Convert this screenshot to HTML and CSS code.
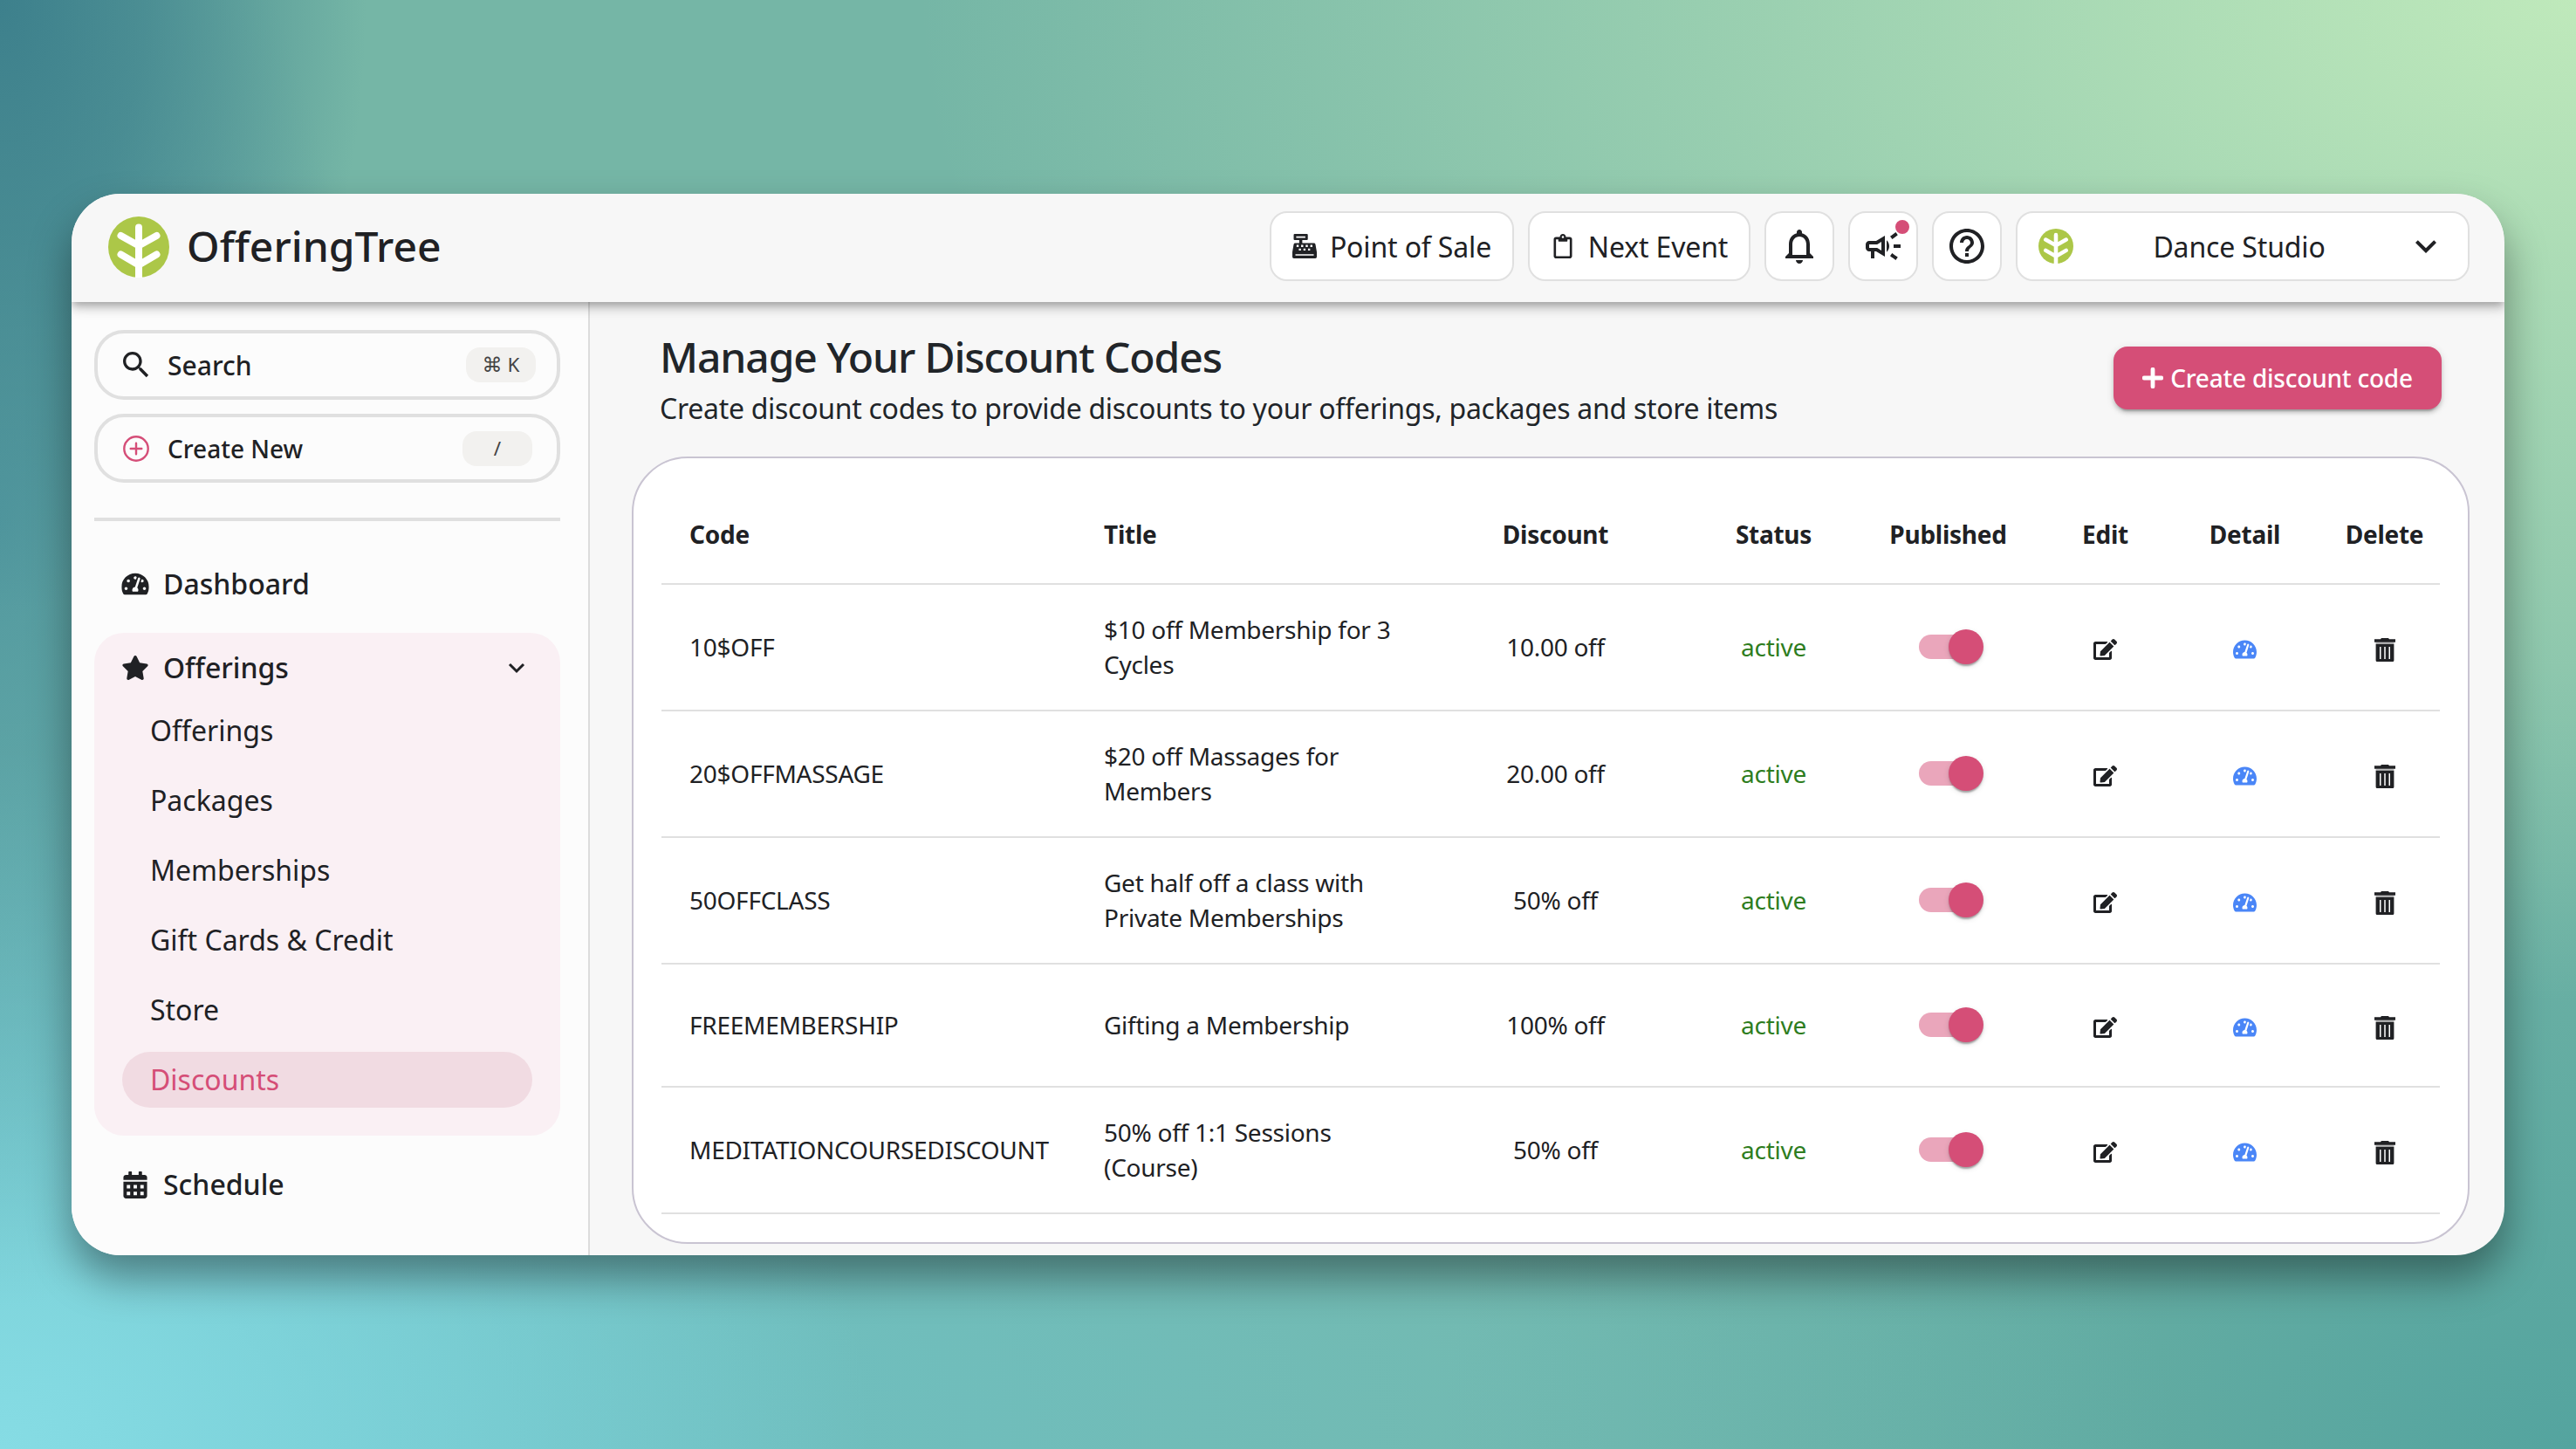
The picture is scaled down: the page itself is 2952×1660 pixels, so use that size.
FILE: index.html
```html
<!DOCTYPE html>
<html lang="en">
<head>
    <meta charset="utf-8"/>
    <title>OfferingTree - Discounts</title>
    <meta name="viewport" content="width=device-width, initial-scale=1.0"/>
    <link rel="stylesheet" href="styles.css">
</head>
<body>

<!-- shared icons -->
<svg class="sprite" aria-hidden="true">
    <symbol id="tree" viewBox="0 0 70 70">
        <circle cx="35" cy="35" r="35" fill="#acc748"/>
        <path d="M35 12.5V74M14.5 22L35 33.5 55.500 22M14.500 43.500L35 55.500 55.500 43.500" fill="none" stroke="#fff" stroke-width="8" stroke-linecap="round"/>
    </symbol>
    <symbol id="gauge" viewBox="0 0 576 512">
        <path d="M288 32C128.940 32 0 160.940 0 320c0 52.800 14.250 102.260 39.060 144.800 5.610 9.620 16.300 15.200 27.440 15.200h443c11.140 0 21.830-5.580 27.440-15.200C561.750 422.260 576 372.800 576 320c0-159.060-128.940-288-288-288zm0 64c14.710 0 26.580 10.130 30.320 23.650-1.110 2.260-2.640 4.230-3.450 6.670l-9.220 27.670c-5.130 3.490-10.970 6.010-17.640 6.010-17.670 0-32-14.330-32-32S270.330 96 288 96zM96 384c-17.670 0-32-14.330-32-32s14.330-32 32-32 32 14.330 32 32-14.330 32-32 32zm48-160c-17.670 0-32-14.330-32-32s14.330-32 32-32 32 14.330 32 32-14.330 32-32 32zm246.770-72.410l-61.330 184C343.130 347.330 352 364.540 352 384c0 11.720-3.380 22.550-8.880 32H232.880c-5.500-9.450-8.880-20.280-8.880-32 0-33.940 26.500-61.430 59.900-63.590l61.340-184.010c4.170-12.560 17.730-19.450 30.360-15.170 12.570 4.190 19.350 17.790 15.170 30.360zm14.660 57.200l15.520-46.550c3.470-1.290 7.130-2.230 11.050-2.230 17.670 0 32 14.330 32 32s-14.330 32-32 32c-11.380-.01-20.890-6.280-26.570-15.220zM480 384c-17.670 0-32-14.330-32-32s14.330-32 32-32 32 14.330 32 32-14.330 32-32 32z"/>
    </symbol>
    <symbol id="edit" viewBox="0 0 576 512">
        <path d="M402.600 83.200l90.200 90.200c3.800 3.800 3.800 10 0 13.800L274.400 405.600l-92.800 10.300c-12.400 1.400-22.900-9.100-21.500-21.500l10.300-92.800L388.800 83.200c3.800-3.800 10-3.800 13.800 0zm162-22.900l-48.800-48.800c-15.200-15.200-39.900-15.200-55.200 0l-35.400 35.400c-3.800 3.800-3.800 10 0 13.800l90.200 90.200c3.800 3.800 10 3.800 13.800 0l35.400-35.400c15.200-15.300 15.200-40 0-55.200zM384 346.200V448H64V128h229.800c3.200 0 6.200-1.300 8.500-3.500l40-40c7.600-7.600 2.200-20.500-8.500-20.500H48C21.500 64 0 85.500 0 112v352c0 26.500 21.500 48 48 48h352c26.500 0 48-21.500 48-48V306.200c0-10.700-12.900-16-20.500-8.500l-40 40c-2.200 2.300-3.500 5.300-3.500 8.500z"/>
    </symbol>
    <symbol id="trash" viewBox="0 0 24 27">
        <path d="M8 0h8l1 1.300h7v3.400H0V1.300h7z"/>
        <path fill-rule="evenodd" d="M1.600 6.800h20.800V25.500a1.500 1.500 0 0 1-1.500 1.500H3.100a1.500 1.500 0 0 1-1.500-1.500zM6 10v14h1.500V10zM11.250 10v14h1.500V10zM16.500 10v14H18V10z"/>
        <path d="M1.600 4.700h20.800v2.100H1.600z" opacity=".3"/>
    </symbol>
</svg>

<div class="window">
    <header class="topbar">
        <svg class="logo"><use href="#tree"/></svg>
        <span class="brand">OfferingTree</span>
        <div class="actions">
            <button class="top_btn pos">
                <svg width="28" height="28" viewBox="0 0 512 512"><path fill-rule="evenodd" d="M48 0h256a20 20 0 0 1 20 20v88a20 20 0 0 1-20 20h-96v64h244c16 0 30 11 32 27l28 160v101a32 32 0 0 1-32 32H32a32 32 0 0 1-32-32V379l28-160c2-16 16-27 32-27h84v-64H48a20 20 0 0 1-20-20V20A20 20 0 0 1 48 0zM80 48v32h192V48zM64 424v28h384v-28zM88 228v44h44v-44zM184 228v44h44v-44zM280 228v44h44v-44zM376 228v44h44v-44zM136 304v44h44v-44zM232 304v44h44v-44zM328 304v44h44v-44z"/></svg>
                <span>Point of Sale</span>
            </button>
            <button class="top_btn next">
                <svg width="28" height="28" viewBox="-64 0 512 512"><path d="M336 64h-80c0-35.300-28.700-64-64-64s-64 28.700-64 64H48C21.500 64 0 85.500 0 112v352c0 26.500 21.500 48 48 48h288c26.500 0 48-21.500 48-48V112c0-26.500-21.500-48-48-48zM192 40c13.300 0 24 10.700 24 24s-10.700 24-24 24-24-10.700-24-24 10.700-24 24-24zm144 418c0 3.300-2.700 6-6 6H54c-3.300 0-6-2.700-6-6V118c0-3.300 2.700-6 6-6h42v36c0 6.600 5.400 12 12 12h168c6.600 0 12-5.400 12-12v-36h42c3.300 0 6 2.700 6 6z"/></svg>
                <span>Next Event</span>
            </button>
            <button class="top_btn square">
                <svg width="48" height="48" viewBox="0 0 24 24"><path d="M12 22c1.100 0 2-.9 2-2h-4c0 1.100.9 2 2 2zm6-6v-5c0-3.070-1.630-5.640-4.500-6.320V4c0-.83-.67-1.500-1.500-1.500s-1.500.67-1.500 1.500v.68C7.640 5.360 6 7.920 6 11v5l-2 2v1h16v-1l-2-2zm-2 1H8v-6c0-2.480 1.510-4.500 4-4.500s4 2.020 4 4.500v6z"/></svg>
            </button>
            <button class="top_btn square">
                <svg width="48" height="48" viewBox="0 0 24 24"><path d="M18 11v2h4v-2h-4zM16 17.610c.96.71 2.210 1.650 3.200 2.390.4-.53.8-1.070 1.200-1.600-.99-.74-2.240-1.680-3.200-2.400-.4.54-.8 1.080-1.200 1.610zM20.400 5.600c-.4-.53-.8-1.070-1.200-1.600-.99.74-2.240 1.680-3.200 2.400.4.53.8 1.070 1.200 1.600.96-.72 2.210-1.650 3.200-2.400zM4 9c-1.100 0-2 .9-2 2v2c0 1.100.9 2 2 2h1v4h2v-4h1l5 3V6L8 9H4zm5.030 1.710L11 9.530v4.940l-1.970-1.180-.48-.29H4v-2h4.550l.48-.29zM15.500 12c0-1.330-.58-2.530-1.500-3.350v6.690c.92-.81 1.500-2.010 1.500-3.340z"/></svg>
                <i class="badge"></i>
            </button>
            <button class="top_btn square">
                <svg width="48" height="48" viewBox="0 0 24 24"><path d="M11 18h2v-2h-2v2zm1-16C6.480 2 2 6.480 2 12s4.480 10 10 10 10-4.480 10-10S17.520 2 12 2zm0 18c-4.410 0-8-3.590-8-8s3.590-8 8-8 8 3.590 8 8-3.590 8-8 8zm0-14c-2.210 0-4 1.790-4 4h2c0-1.100.9-2 2-2s2 .9 2 2c0 2-3 1.750-3 5h2c0-2.250 3-2.500 3-5 0-2.210-1.790-4-4-4z"/></svg>
            </button>
            <button class="top_btn studio">
                <svg width="40" height="40"><use href="#tree"/></svg>
                <span>Dance Studio</span>
                <svg width="48" height="48" viewBox="0 0 24 24"><path d="M7.410 8.590L12 13.170l4.590-4.580L18 10l-6 6-6-6z"/></svg>
            </button>
        </div>
    </header>

    <div class="body">
        <aside class="sidebar">
            <div class="quick search">
                <svg width="40" height="40" viewBox="0 0 24 24"><path d="M15.500 14h-.79l-.28-.27C15.410 12.590 16 11.110 16 9.500 16 5.910 13.090 3 9.500 3S3 5.910 3 9.500 5.910 16 9.500 16c1.610 0 3.090-.59 4.230-1.570l.27.28v.79l5 4.990L20.490 19l-4.990-5zm-6 0C7.010 14 5 11.990 5 9.500S7.010 5 9.500 5 14 7.010 14 9.500 11.990 14 9.500 14z"/></svg>
                <span>Search</span>
                <kbd><b>⌘</b> K</kbd>
            </div>
            <div class="quick create">
                <svg class="plus_circle" width="40" height="40" viewBox="0 0 40 40"><circle cx="20" cy="20" r="13.700"/><path d="M20 13.700v12.600M13.700 20h12.600"/></svg>
                <span>Create New</span>
                <kbd>/</kbd>
            </div>
            <hr>
            <a class="nav_item">
                <svg width="32" height="28" viewBox="0 0 576 512"><use href="#gauge"/></svg>
                <span>Dashboard</span>
            </a>
            <div class="nav_group">
                <a class="nav_item">
                    <svg width="32" height="28" viewBox="0 0 576 512"><path d="M259.300 17.800L194 150.200 47.900 171.500c-26.200 3.800-36.700 36.100-17.700 54.600l105.700 103-25 145.500c-4.500 26.300 23.200 46 46.400 33.700L288 439.600l130.700 68.700c23.200 12.200 50.900-7.400 46.400-33.700l-25-145.500 105.700-103c19-18.500 8.500-50.800-17.700-54.600L382 150.200 316.700 17.800c-11.700-23.600-45.600-23.900-57.400 0z"/></svg>
                    <span>Offerings</span>
                    <svg class="caret" width="20" height="14" viewBox="0 0 20 14"><path d="M2 3l8 8 8-8" fill="none" stroke="#202124" stroke-width="3"/></svg>
                </a>
                <ul>
                    <li>Offerings</li>
                    <li>Packages</li>
                    <li>Memberships</li>
                    <li>Gift Cards &amp; Credit</li>
                    <li>Store</li>
                    <li class="active">Discounts</li>
                </ul>
            </div>
            <a class="nav_item">
                <svg width="32" height="31" viewBox="-40 0 528 512"><path fill-rule="evenodd" d="M0 464c0 26.500 21.500 48 48 48h352c26.500 0 48-21.500 48-48V192H0zM64 256h64v64H64zM192 256h64v64h-64zM320 256h64v64h-64zM64 384h64v64H64zM192 384h64v64h-64zM320 384h64v64h-64zM448 112v48H0v-48c0-26.500 21.500-48 48-48h48V12c0-6.600 5.400-12 12-12h40c6.600 0 12 5.400 12 12v52h128V12c0-6.600 5.400-12 12-12h40c6.600 0 12 5.400 12 12v52h48c26.500 0 48 21.500 48 48z"/></svg>
                <span>Schedule</span>
            </a>
        </aside>

        <main class="content">
            <div class="page_head">
                <div>
                    <h1>Manage Your Discount Codes</h1>
                    <p>Create discount codes to provide discounts to your offerings, packages and store items</p>
                </div>
                <button class="create_btn">
                    <svg width="24" height="24" viewBox="0 0 24 24"><path d="M12 2.200v19.600M2.200 12h19.600" stroke="#fff" stroke-width="4.800" stroke-linecap="round"/></svg>
                    <span>Create discount code</span>
                </button>
            </div>

            <div class="card">
                <table>
                    <colgroup>
                        <col class="c_code"><col class="c_title"><col class="c_discount"><col class="c_status">
                        <col class="c_published"><col class="c_edit"><col class="c_detail"><col class="c_delete">
                    </colgroup>
                    <thead>
                    <tr>
                        <th class="left">Code</th>
                        <th class="left">Title</th>
                        <th>Discount</th>
                        <th>Status</th>
                        <th>Published</th>
                        <th>Edit</th>
                        <th>Detail</th>
                        <th>Delete</th>
                    </tr>
                    </thead>
                    <tbody>
                    <tr>
                        <td class="left">10$OFF</td>
                        <td class="left">$10 off Membership for 3 Cycles</td>
                        <td>10.00 off</td>
                        <td class="status">active</td>
                        <td><span class="switch"></span></td>
                        <td><svg class="icon"><use href="#edit"/></svg></td>
                        <td><svg class="icon blue"><use href="#gauge"/></svg></td>
                        <td><svg class="icon trash"><use href="#trash"/></svg></td>
                    </tr>
                    <tr>
                        <td class="left">20$OFFMASSAGE</td>
                        <td class="left">$20 off Massages for Members</td>
                        <td>20.00 off</td>
                        <td class="status">active</td>
                        <td><span class="switch"></span></td>
                        <td><svg class="icon"><use href="#edit"/></svg></td>
                        <td><svg class="icon blue"><use href="#gauge"/></svg></td>
                        <td><svg class="icon trash"><use href="#trash"/></svg></td>
                    </tr>
                    <tr>
                        <td class="left">50OFFCLASS</td>
                        <td class="left">Get half off a class with Private Memberships</td>
                        <td>50% off</td>
                        <td class="status">active</td>
                        <td><span class="switch"></span></td>
                        <td><svg class="icon"><use href="#edit"/></svg></td>
                        <td><svg class="icon blue"><use href="#gauge"/></svg></td>
                        <td><svg class="icon trash"><use href="#trash"/></svg></td>
                    </tr>
                    <tr class="single">
                        <td class="left">FREEMEMBERSHIP</td>
                        <td class="left">Gifting a Membership</td>
                        <td>100% off</td>
                        <td class="status">active</td>
                        <td><span class="switch"></span></td>
                        <td><svg class="icon"><use href="#edit"/></svg></td>
                        <td><svg class="icon blue"><use href="#gauge"/></svg></td>
                        <td><svg class="icon trash"><use href="#trash"/></svg></td>
                    </tr>
                    <tr>
                        <td class="left">MEDITATIONCOURSEDISCOUNT</td>
                        <td class="left">50% off 1:1 Sessions (Course)</td>
                        <td>50% off</td>
                        <td class="status">active</td>
                        <td><span class="switch"></span></td>
                        <td><svg class="icon"><use href="#edit"/></svg></td>
                        <td><svg class="icon blue"><use href="#gauge"/></svg></td>
                        <td><svg class="icon trash"><use href="#trash"/></svg></td>
                    </tr>
                    </tbody>
                </table>
            </div>
        </main>
    </div>
</div>
</body>
</html>
```
FILE: styles.css
```css
* {
    box-sizing: border-box;
}

body {
    margin: 0;
    height: 1660px;
    padding: 222px 82px;
    overflow: hidden;
    font-family: "Noto Sans", "Open Sans", sans-serif;
    font-size: 32px;
    color: #202124;
    background:
        radial-gradient(ellipse 420px 700px at 0 0, #3d808c 0%, #3d808cb3 40%, #3d808c00 100%),
        radial-gradient(ellipse 420px 900px at 0 36%, #4a929ecc 0%, #4a929e00 100%),
        radial-gradient(ellipse 1000px 800px at 0 100%, #86dce4 0%, #86dce400 100%),
        radial-gradient(ellipse 2500px 1000px at 0 100%, #6cc3cc 0%, #6cc3cc00 100%),
        radial-gradient(ellipse 1900px 1150px at 100% 0, #bfe9bb 0%, #bfe9bb00 100%),
        radial-gradient(ellipse 1300px 900px at 100% 100%, #54a49f 0%, #54a49f00 100%),
        #75b6a6;
}

button {
    font: inherit;
    color: inherit;
}

svg {
    display: block;
    flex: none;
    fill: #202124;
}

.sprite {
    position: absolute;
    width: 0;
    height: 0;
}

.window {
    width: 2788px;
    height: 1216px;
    display: flex;
    flex-direction: column;
    border-radius: 56px;
    overflow: hidden;
    background: #f7f7f7;
    box-shadow: 0 26px 48px rgba(0, 0, 0, 0.4);
}

/* top bar */
.topbar {
    position: relative;
    z-index: 1;
    flex: none;
    height: 124px;
    padding: 0 40px 4px 42px;
    display: flex;
    align-items: center;
    background: #f7f7f7;
    box-shadow: 0 4px 8px -2px rgba(0, 0, 0, 0.2), 0 8px 10px rgba(0, 0, 0, 0.14), 0 2px 20px rgba(0, 0, 0, 0.12);
}

.logo {
    width: 70px;
    height: 70px;
    margin-top: 2px;
}

.brand {
    margin-left: 20px;
    font-size: 48px;
    font-weight: 500;
    line-height: 80px;
}

.actions {
    margin-left: auto;
    display: flex;
    gap: 16px;
}

.top_btn {
    position: relative;
    height: 80px;
    padding: 0 24px;
    display: flex;
    align-items: center;
    justify-content: center;
    gap: 15px;
    background: #fff;
    border: 2px solid #e0e0e0;
    border-radius: 20px;
    white-space: nowrap;
    letter-spacing: -0.150px;
}

.top_btn.pos {
    width: 280px;
    padding: 0 22px;
}

.top_btn.next {
    width: 255px;
    padding: 0 22px;
}

.top_btn.square {
    width: 80px;
    padding: 0;
}

.top_btn.studio {
    width: 520px;
    gap: 0;
}

.studio span {
    flex: 1;
    text-align: center;
}

.badge {
    position: absolute;
    top: 8px;
    right: 8px;
    width: 16px;
    height: 16px;
    border-radius: 50%;
    background: #d54e77;
}

.body {
    flex: 1;
    display: flex;
    min-height: 0;
}

/* sidebar */
.sidebar {
    width: 594px;
    flex: none;
    padding: 32px 32px 0 26px;
    background: #fcfcfc;
    border-right: 2px solid #dcdcdc;
}

.quick {
    height: 80px;
    margin-bottom: 16px;
    padding: 0 24px;
    display: flex;
    align-items: center;
    border: 4px solid #e0e0e0;
    border-radius: 34px;
    font-size: 30px;
    font-weight: 500;
}

.quick span {
    margin-left: 16px;
}

.create {
    height: 79px;
    padding-right: 28px;
    font-size: 28px;
}

.plus_circle {
    fill: none;
    stroke: #d54e78;
    stroke-width: 2.400;
    stroke-linecap: round;
}

kbd {
    margin-left: auto;
    width: 80px;
    height: 40px;
    border-radius: 16px;
    background: #f2f1ef;
    font-family: inherit;
    font-size: 22.500px;
    font-weight: 400;
    line-height: 40px;
    text-align: center;
    color: #444;
    white-space: nowrap;
}

kbd b {
    font-family: "DejaVu Sans", sans-serif;
    font-size: 23px;
    font-weight: 400;
    line-height: 1;
}

hr {
    height: 4px;
    margin: 40px 0 32px;
    border: 0;
    background: #e0e0e0;
}

.nav_item {
    height: 80px;
    padding: 0 40px 0 31px;
    display: flex;
    align-items: center;
    gap: 16px;
    font-weight: 500;
}

.nav_item span {
    margin-top: -1px;
}

.caret {
    margin-left: auto;
}

.nav_group {
    margin: 16px 0 16px;
    padding-bottom: 32px;
    background: #faf0f4;
    border-radius: 34px;
}

.nav_group ul {
    margin: 0;
    padding: 0 32px;
    list-style: none;
    display: grid;
    gap: 16px;
}

.nav_group li {
    height: 64px;
    padding-left: 32px;
    border-radius: 32px;
    line-height: 64px;
}

.nav_group li.active {
    background: #f1dbe2;
    color: #d54e77;
}

/* content */
.content {
    flex: 1;
    padding: 33px 40px 0 48px;
}

.page_head {
    display: flex;
    justify-content: space-between;
    padding: 0 32px;
    margin-bottom: 31px;
    color: #212529;
}

h1 {
    margin: 0 0 5px;
    font-size: 48px;
    font-weight: 500;
    line-height: 60px;
    letter-spacing: -1.100px;
}

.page_head p {
    margin: 0;
    line-height: 48px;
    letter-spacing: -0.290px;
}

.create_btn {
    height: 72px;
    width: 376px;
    margin-top: 18px;
    padding: 0;
    display: flex;
    align-items: center;
    justify-content: center;
    gap: 8px;
    border: 0;
    border-radius: 16px;
    background: #d54e77;
    color: #fff;
    font-size: 28px;
    font-weight: 500;
    letter-spacing: -0.220px;
    white-space: nowrap;
    box-shadow: 0 6px 2px -4px rgba(0, 0, 0, 0.2), 0 4px 4px rgba(0, 0, 0, 0.14), 0 2px 10px rgba(0, 0, 0, 0.12);
}

.card {
    height: 902px;
    padding: 32px;
    background: #fff;
    border: 2px solid #c9c4d2;
    border-radius: 64px;
}

table {
    width: 2038px;
    table-layout: fixed;
    border-collapse: separate;
    border-spacing: 0;
    font-size: 28px;
    line-height: 40px;
    letter-spacing: -0.260px;
}

.c_code { width: 475px; }
.c_title { width: 383px; }
.c_discount { width: 332px; }
.c_status { width: 168px; }
.c_published { width: 232px; }
.c_edit { width: 128px; }
.c_detail { width: 192px; }
.c_delete { width: 128px; }

th, td {
    padding: 0 0 2px 1px;
    height: 145px;
    border-bottom: 2px solid #e0e0e0;
    text-align: center;
    vertical-align: middle;
}

th {
    height: 113px;
    font-weight: 700;
}

.single td {
    height: 141px;
}

.left {
    padding-left: 32px;
    text-align: left;
}

.status {
    color: #2e7d1e;
}

.switch {
    display: block;
    position: relative;
    width: 68px;
    height: 28px;
    margin: 0 auto;
    border-radius: 14px;
    background: #eaa6bb;
}

.switch::after {
    content: "";
    position: absolute;
    top: -6px;
    right: -6px;
    width: 40px;
    height: 40px;
    border-radius: 50%;
    background: #d54e77;
    box-shadow: 0 4px 2px -2px rgba(0, 0, 0, 0.2), 0 2px 2px rgba(0, 0, 0, 0.14), 0 2px 6px rgba(0, 0, 0, 0.12);
}

.icon {
    width: 27px;
    height: 24px;
    margin: 7px auto 0;
}

.icon.blue {
    fill: #4a86f7;
}

.icon.trash {
    width: 24px;
    height: 27px;
}
```
